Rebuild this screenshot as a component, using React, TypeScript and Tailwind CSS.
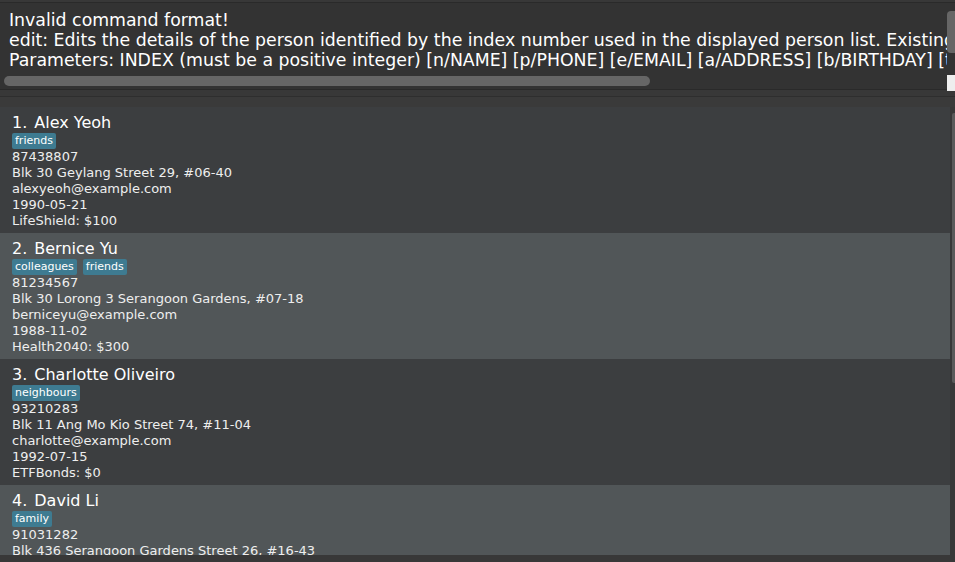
import React from "react";

const persons = [
  {
    name: "Alex Yeoh",
    tags: ["friends"],
    phone: "87438807",
    address: "Blk 30 Geylang Street 29, #06-40",
    email: "alexyeoh@example.com",
    birthday: "1990-05-21",
    policy: "LifeShield: $100",
  },
  {
    name: "Bernice Yu",
    tags: ["colleagues", "friends"],
    phone: "81234567",
    address: "Blk 30 Lorong 3 Serangoon Gardens, #07-18",
    email: "berniceyu@example.com",
    birthday: "1988-11-02",
    policy: "Health2040: $300",
  },
  {
    name: "Charlotte Oliveiro",
    tags: ["neighbours"],
    phone: "93210283",
    address: "Blk 11 Ang Mo Kio Street 74, #11-04",
    email: "charlotte@example.com",
    birthday: "1992-07-15",
    policy: "ETFBonds: $0",
  },
  {
    name: "David Li",
    tags: ["family"],
    phone: "91031282",
    address: "Blk 436 Serangoon Gardens Street 26, #16-43",
    email: "lidavid@example.com",
    birthday: "1985-03-09",
    policy: "HomeCover: $200",
  },
];

const font = { fontFamily: '"DejaVu Sans", Verdana, sans-serif' };

function PersonCard({ p, i }: { p: (typeof persons)[number]; i: number }) {
  return (
    <div
      className={`h-[126px] shrink-0 pl-[12px] pt-[6px] ${
        i % 2 === 0 ? "bg-[#3c3e40]" : "bg-[#515658]"
      }`}
    >
      <div className="flex h-[20px] items-center text-[16px] leading-[20px] text-white">
        <span className="mr-[7px]">{i + 1}.</span>
        <span>{p.name}</span>
      </div>
      <div className="flex h-[16px] gap-[6px]">
        {p.tags.map((t) => (
          <span
            key={t}
            className="rounded-[2px] bg-[#3e7b91] px-[3px] text-[11px] leading-[15px] text-white"
          >
            {t}
          </span>
        ))}
      </div>
      <div className="text-[13px] leading-[16px] text-[#eeeeee]">
        <div>{p.phone}</div>
        <div>{p.address}</div>
        <div>{p.email}</div>
        <div>{p.birthday}</div>
        <div>{p.policy}</div>
      </div>
    </div>
  );
}

export default function App() {
  return (
    <div className="flex h-[562px] w-[955px] flex-col overflow-hidden bg-[#383838]" style={font}>
      {/* Result display */}
      <div className="relative mt-[2px] flex h-[87px] shrink-0 border-t border-[#2a2a2a] bg-[#333333]">
        <div className="mr-[8px] min-w-0 flex-1 overflow-hidden whitespace-pre pl-[9px] pt-[7px] text-[17.33px] leading-[20px] text-white">
          <div>Invalid command format!</div>
          <div>
            edit: Edits the details of the person identified by the index number used in the displayed person list. Existing values will be overwritten by the input values.
          </div>
          <div>
            Parameters: INDEX (must be a positive integer) [n/NAME] [p/PHONE] [e/EMAIL] [a/ADDRESS] [b/BIRTHDAY] [t/TAG]...
          </div>
        </div>
        {/* horizontal scrollbar */}
        <div className="absolute left-[4px] top-[73px] h-[10px] w-[646px] rounded-[5px] bg-[#666666]" />
        {/* vertical scrollbar */}
        <div className="absolute right-0 top-[8px] h-[42px] w-[8px] rounded-l-[4px] bg-[#666666]" />
        <div className="absolute right-0 top-[72px] h-[16px] w-[8px] bg-[#eeeeee]" />
      </div>

      <div className="h-[7px] shrink-0 border-t border-[#2a2a2a] bg-[#383838]" />
      <div className="h-[11px] shrink-0 border-t border-[#2e2e2e] bg-[#3a3a3a]" />

      {/* Person list */}
      <div className="flex min-h-0 flex-1 pb-[7px]">
        <div className="flex min-w-0 flex-1 flex-col overflow-hidden">
          {persons.map((p, i) => (
            <PersonCard key={p.name} p={p} i={i} />
          ))}
        </div>
        <div className="w-[5px] shrink-0 bg-[#383838] pl-[2px] pt-[6px]">
          <div className="h-[270px] w-[3px] rounded-l-[2px] bg-[#5a5a5a]" />
        </div>
      </div>
    </div>
  );
}
